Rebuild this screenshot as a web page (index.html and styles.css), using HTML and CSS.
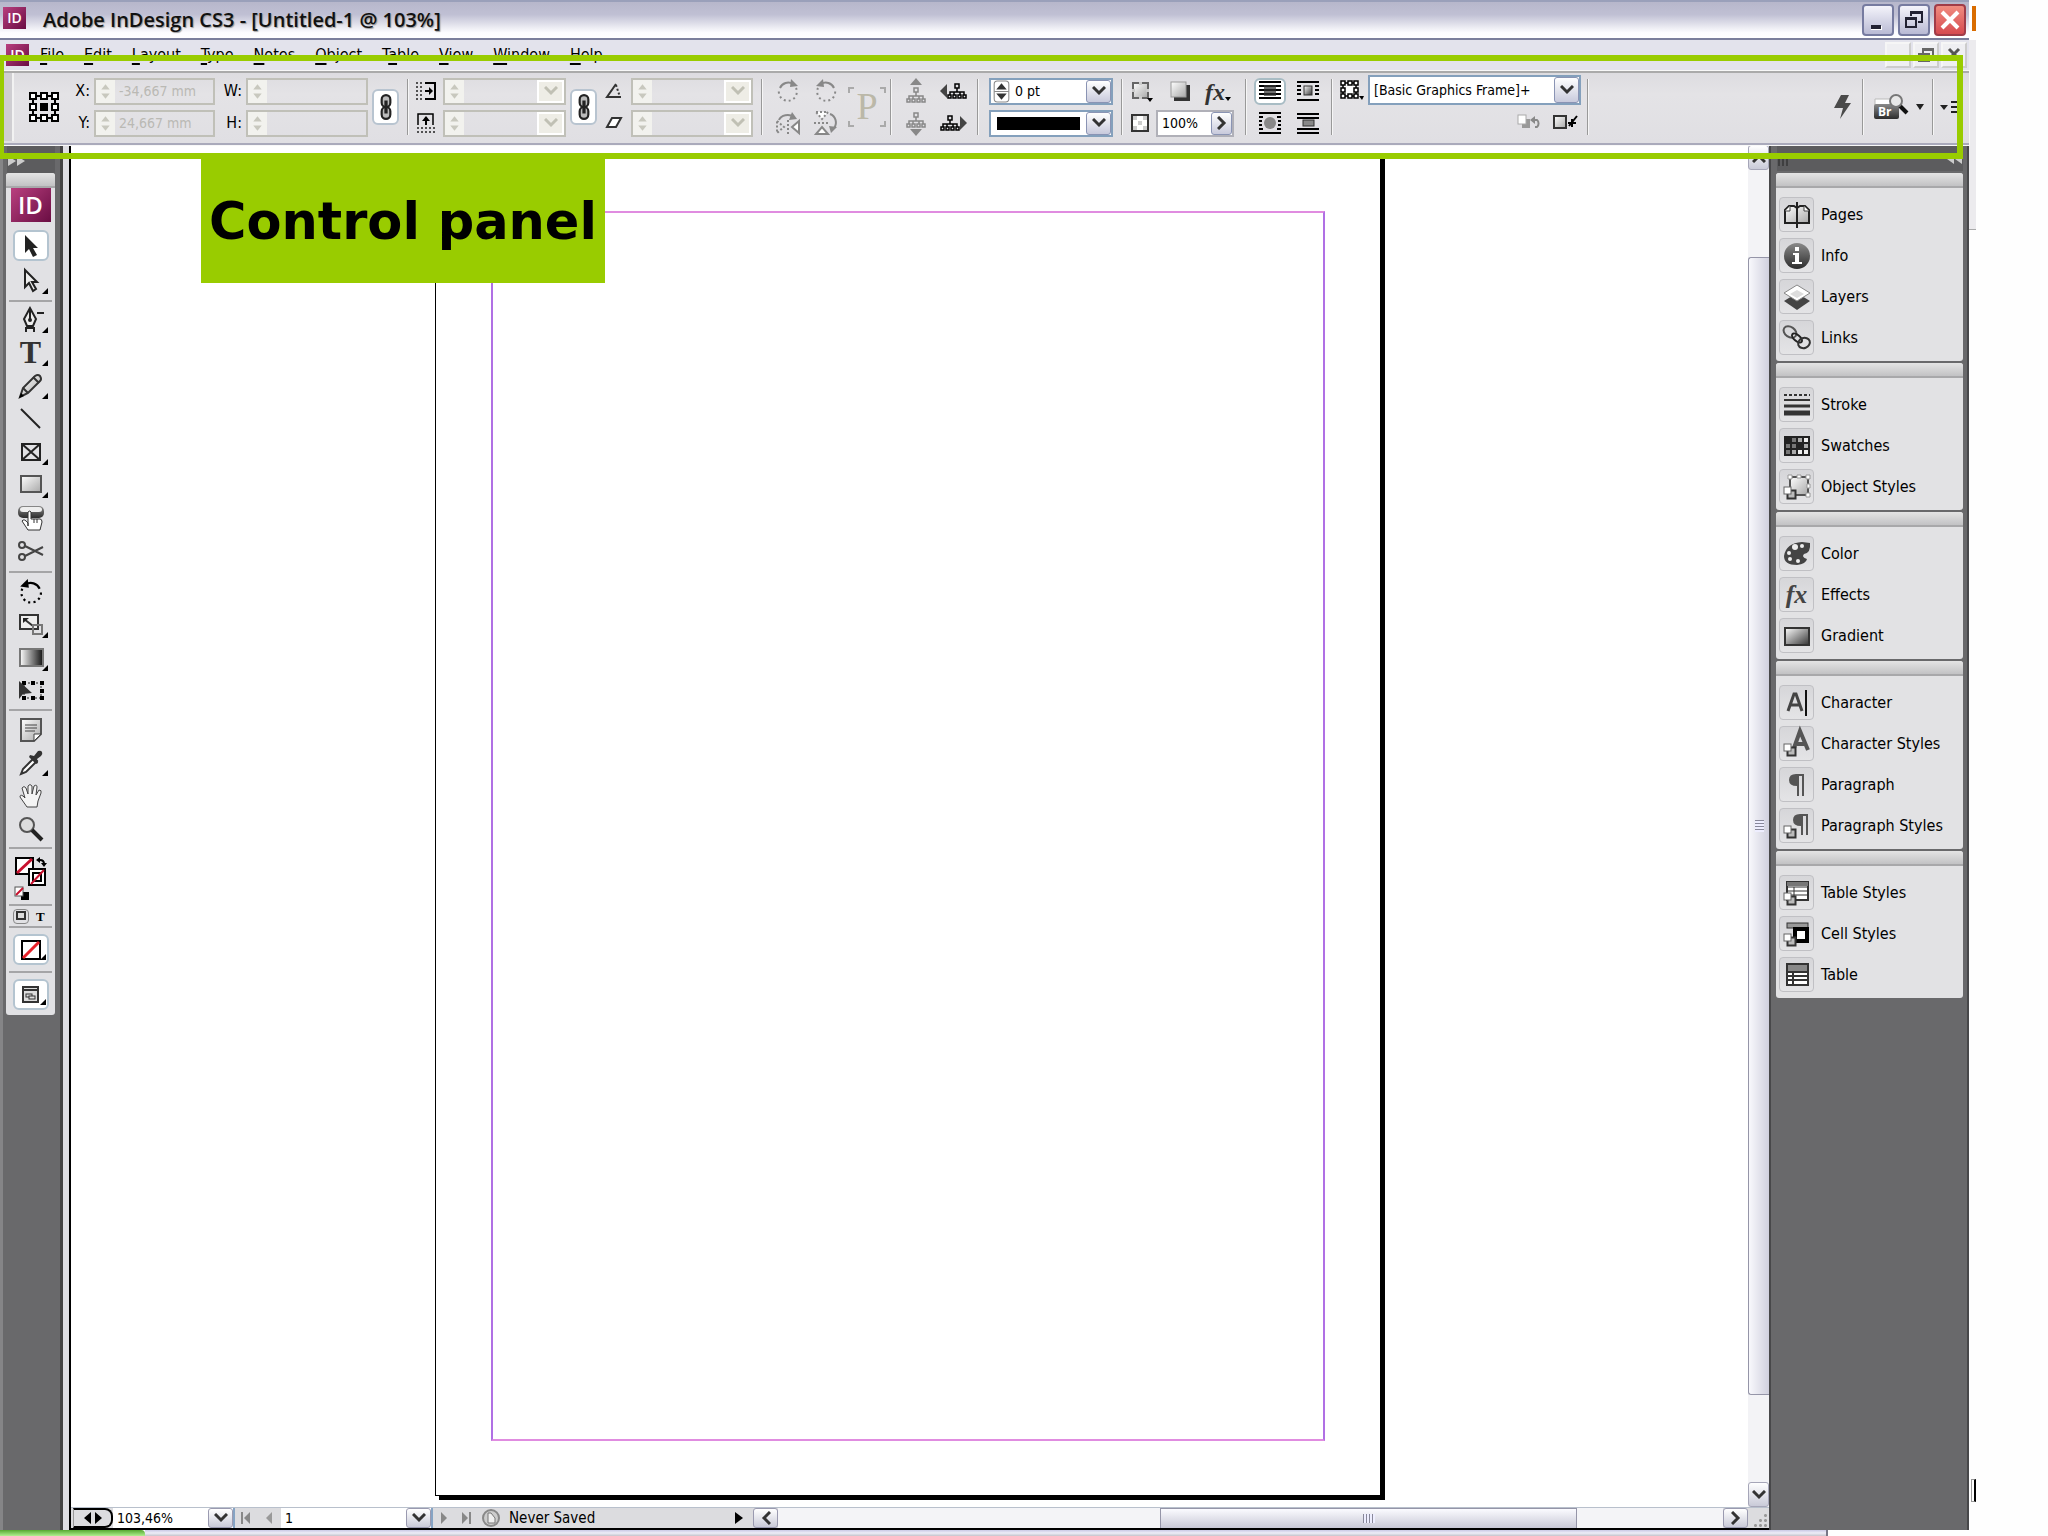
FILE: index.html
```html
<!DOCTYPE html>
<html lang="en">
<head>
<meta charset="utf-8">
<title>Adobe InDesign CS3 - [Untitled-1 @ 103%]</title>
<link rel="stylesheet" href="styles.css">
</head>
<body>
<svg class="defs" aria-hidden="true">
  <defs>
    <linearGradient id="g-bw" x1="0" y1="0" x2="1" y2="0"><stop offset="0" stop-color="#fff"/><stop offset="1" stop-color="#111"/></linearGradient>
    <linearGradient id="g-diag" x1="0" y1="0" x2="1" y2="1"><stop offset="0" stop-color="#fff"/><stop offset="1" stop-color="#333"/></linearGradient>
    <linearGradient id="g-soft" x1="0" y1="0" x2="1" y2="1"><stop offset="0" stop-color="#fff"/><stop offset="1" stop-color="#a8a8a8"/></linearGradient>
    <linearGradient id="g-dark" x1="0" y1="0" x2="0" y2="1"><stop offset="0" stop-color="#8a8a8a"/><stop offset="1" stop-color="#2c2c2c"/></linearGradient>
    <symbol id="spin" viewBox="0 0 12 20"><path d="M2 8l4-5 4 5zM2 12l4 5 4-5z" fill="currentColor"/></symbol>
    <symbol id="spinbox" viewBox="0 0 16 22"><rect x="1" y="1" width="14" height="20" rx="3" fill="#fff" stroke="#888"/><path d="M1 11h14" stroke="#888"/><path d="M3 9l5-6 5 6zM3 13l5 6 5-6z" fill="#333"/></symbol>
    <symbol id="chev" viewBox="0 0 14 10"><path d="M1 1l6 6 6-6" fill="none" stroke="currentColor" stroke-width="3"/></symbol>
    <symbol id="link" viewBox="0 0 12 24"><g fill="#bbb" stroke="#222" stroke-width="2"><rect x="2" y="1" width="8" height="11" rx="4"/><rect x="2" y="12" width="8" height="11" rx="4"/></g><path d="M6 6v12" stroke="#222" stroke-width="3"/></symbol>
    <symbol id="tree" viewBox="0 0 20 16"><g fill="none" stroke="currentColor" stroke-width="1.500"><rect x="8" y="1" width="4" height="4"/><path d="M10 5v4M3 12V9h14v3M7 12V9M13 12V9"/><rect x="1" y="12" width="3" height="3"/><rect x="6" y="12" width="3" height="3"/><rect x="11" y="12" width="3" height="3"/><rect x="16" y="12" width="3" height="3"/></g></symbol>
    <symbol id="stack" viewBox="0 0 14 14"><rect x="4.500" y="4.500" width="8" height="8" fill="#bbb" stroke="#333" stroke-width="2"/><rect x="1" y="1" width="7" height="7" fill="#fff" stroke="#666"/></symbol>
    <symbol id="rot" viewBox="0 0 24 24"><path d="M20 9a9 9 0 1 1-17 2" fill="none" stroke="currentColor" stroke-width="2" stroke-dasharray="2 3"/><path d="M4 9a9 9 0 0 1 13-4" fill="none" stroke="currentColor" stroke-width="2"/><path d="M15 0l7 7-8 1z" fill="currentColor"/></symbol>
  </defs>
</svg>

<div class="desktop">
  <main class="app">
    <header class="titlebar">
      <span class="logo logo-s">ID</span>
      <h1>Adobe InDesign CS3 - [Untitled-1 @ 103%]</h1>
      <div class="winbtns">
        <button aria-label="Minimize"><svg width="24" height="24"><path d="M5 18h11v4H5z" fill="#fff"/><path d="M5 17h10v4H5z" fill="#223"/></svg></button>
        <button aria-label="Restore"><svg width="24" height="24" fill="none" stroke="#223" stroke-width="2"><path d="M9 8V4h11v10h-4"/><path d="M9 5h11"/><rect x="4" y="10" width="10" height="9"/><path d="M4 11h10"/></svg></button>
        <button class="close" aria-label="Close"><svg width="24" height="24" stroke="#fff" stroke-width="4"><path d="M4 4l16 16M20 4L4 20"/></svg></button>
      </div>
    </header>

    <nav class="menubar" aria-label="Main menu">
      <span class="logo logo-s">ID</span>
      <a href="#"><u>F</u>ile</a><a href="#"><u>E</u>dit</a><a href="#"><u>L</u>ayout</a><a href="#"><u>T</u>ype</a><a href="#"><u>N</u>otes</a><a href="#"><u>O</u>bject</a><a href="#">T<u>a</u>ble</a><a href="#"><u>V</u>iew</a><a href="#"><u>W</u>indow</a><a href="#"><u>H</u>elp</a>
      <div class="docbtns">
        <button aria-label="Minimize document"></button>
        <button aria-label="Restore document"><svg width="18" height="18" fill="none" stroke="#666" stroke-width="2"><path d="M6 7V3h10v8h-3M6 4h10"/><rect x="2" y="8" width="10" height="7"/></svg></button>
        <button aria-label="Close document"><svg width="18" height="18" stroke="#555" stroke-width="3"><path d="M4 3l10 10M14 3L4 13"/></svg></button>
      </div>
    </nav>

    <section class="controls" aria-label="Control panel">
      <span class="grip"></span>
      <button class="refpoint" aria-label="Reference point"><svg width="30" height="30" viewBox="0 0 30 30"><g fill="none" stroke="#000" stroke-width="2"><path d="M8 4h4M18 4h5M8 26h4M18 26h5M4 8v4M4 18v5M26 8v4M26 18v5"/><g fill="#fff"><rect x="1" y="1" width="6" height="6"/><rect x="12" y="1" width="6" height="6"/><rect x="23" y="1" width="6" height="6"/><rect x="1" y="12" width="6" height="6"/><rect x="23" y="12" width="6" height="6"/><rect x="1" y="23" width="6" height="6"/><rect x="12" y="23" width="6" height="6"/><rect x="23" y="23" width="6" height="6"/></g></g><rect x="11" y="11" width="8" height="8"/></svg></button>
      <div class="pairs pos">
        <label for="x">X:</label><div class="field off"><svg class="sp"><use href="#spin"/></svg><input id="x" value="-34,667 mm" disabled></div>
        <label for="y">Y:</label><div class="field off"><svg class="sp"><use href="#spin"/></svg><input id="y" value="24,667 mm" disabled></div>
      </div>
      <div class="pairs size">
        <label for="w">W:</label><div class="field off"><svg class="sp"><use href="#spin"/></svg><input id="w" disabled></div>
        <label for="h">H:</label><div class="field off"><svg class="sp"><use href="#spin"/></svg><input id="h" disabled></div>
      </div>
      <button class="linkbtn" aria-label="Constrain proportions"><svg width="14" height="26"><use href="#link"/></svg></button>
      <span class="sep"></span>
      <div class="pairs scale">
        <label for="sx"><svg width="20" height="18"><path d="M1 0v18M5 0v18" stroke="#222" stroke-width="1.500" stroke-dasharray="2 2"/><path d="M9 1h10v16H9" fill="none" stroke="#000" stroke-width="2"/><path d="M9 9h6" stroke="#000" stroke-width="2"/><path d="M13 5l4 4-4 4z"/></svg></label><div class="field off"><svg class="sp"><use href="#spin"/></svg><input id="sx" aria-label="Scale X" disabled><button disabled aria-label="Scale X values"><svg class="cv"><use href="#chev"/></svg></button></div>
        <label for="sy"><svg width="18" height="20"><path d="M1 12V1h15v11" fill="none" stroke="#000" stroke-width="1.500"/><path d="M9 5v7" stroke="#000" stroke-width="2"/><path d="M5 8l4-5 4 5z"/><path d="M0 15h18M0 19h18" stroke="#222" stroke-width="1.500" stroke-dasharray="2 2"/></svg></label><div class="field off"><svg class="sp"><use href="#spin"/></svg><input id="sy" aria-label="Scale Y" disabled><button disabled aria-label="Scale Y values"><svg class="cv"><use href="#chev"/></svg></button></div>
      </div>
      <button class="linkbtn" aria-label="Constrain scaling"><svg width="14" height="26"><use href="#link"/></svg></button>
      <div class="pairs angle">
        <label for="ro"><svg width="18" height="16"><path d="M11 1L2 14h14" fill="none" stroke="#333" stroke-width="2"/><path d="M11 2l4 12" stroke="#333" stroke-width="2" stroke-dasharray="2 2"/></svg></label><div class="field off"><svg class="sp"><use href="#spin"/></svg><input id="ro" aria-label="Rotation angle" disabled><button disabled aria-label="Rotation values"><svg class="cv"><use href="#chev"/></svg></button></div>
        <label for="sh"><svg width="18" height="14"><path d="M7 2h9l-5 9H2z" fill="#fff" stroke="#333" stroke-width="2"/></svg></label><div class="field off"><svg class="sp"><use href="#spin"/></svg><input id="sh" aria-label="Shear angle" disabled><button disabled aria-label="Shear values"><svg class="cv"><use href="#chev"/></svg></button></div>
      </div>
      <span class="sep wide"></span>
      <div class="icons two dim">
        <button aria-label="Rotate clockwise"><svg width="24" height="24"><use href="#rot"/></svg></button>
        <button aria-label="Rotate counterclockwise"><svg class="mirror" width="24" height="24"><use href="#rot"/></svg></button>
        <button aria-label="Flip horizontal"><svg width="26" height="24" fill="none" stroke="#888" stroke-width="2"><path d="M4 9a9 7 0 0 1 15-3"/><path d="M17 1l5 7-8 1z" fill="#888" stroke="none"/><path d="M13 9v14" stroke-dasharray="2 2"/><path d="M2 10l7 6-7 6z" stroke-dasharray="2 2"/><path d="M24 10l-7 6 7 6z" fill="#fff"/></svg></button>
        <button aria-label="Flip vertical"><svg width="26" height="24" fill="none" stroke="#888" stroke-width="2"><path d="M3 1h12l-6 7z" fill="#fff" stroke-dasharray="2 2"/><path d="M1 12h16" stroke-dasharray="2 2"/><path d="M3 23h12l-6-7z" fill="#fff"/><path d="M17 3a9 9 0 0 1 4 14"/><path d="M16 15l8 1-6 6z" fill="#888" stroke="none"/></svg></button>
      </div>
      <span class="pmark">P</span>
      <span class="sep tight"></span>
      <div class="icons two">
        <button class="muted" aria-label="Select container"><svg width="20" height="26"><path d="M4 7l6-7 6 7z" fill="currentColor"/><use href="#tree" y="9" width="20" height="16"/></svg></button>
        <button aria-label="Select previous object"><svg width="28" height="20"><path d="M7 3v14l-7-7z" fill="#444"/><use href="#tree" x="7" y="2" width="20" height="16"/></svg></button>
        <button class="muted" aria-label="Select content"><svg width="20" height="26"><path d="M4 19l6 7 6-7z" fill="currentColor"/><use href="#tree" y="2" width="20" height="16"/></svg></button>
        <button aria-label="Select next object"><svg width="28" height="20"><path d="M20 3v14l7-7z" fill="#444"/><use href="#tree" y="2" width="20" height="16"/></svg></button>
      </div>
      <span class="sep tight"></span>
      <div class="pairs stroke">
        <div class="field on"><svg class="boxed"><use href="#spinbox"/></svg><input id="sw" aria-label="Stroke weight" value="0 pt"><button aria-label="Stroke weights"><svg class="cv"><use href="#chev"/></svg></button></div>
        <div class="field on"><span class="solid"></span><button aria-label="Stroke type"><svg class="cv"><use href="#chev"/></svg></button></div>
      </div>
      <span class="sep"></span>
      <div class="fxgroup">
        <div class="icons three">
          <button aria-label="Object effects target"><svg width="24" height="22"><rect x="3" y="3" width="15" height="15" fill="url(#g-soft)" stroke="#666" stroke-width="2"/><path d="M9 2h3v3H9zM9 16h3v3H9zM2 9h3v3H2zM16 9h3v3h-3z" fill="#ccc"/><path d="M17 18h6l-3 4z"/></svg></button>
          <button aria-label="Drop shadow"><svg width="22" height="22"><rect x="5" y="5" width="16" height="16" fill="#333"/><rect x="2" y="2" width="15" height="15" fill="url(#g-soft)" stroke="#999"/></svg></button>
          <button class="fx" aria-label="Effects"><span>fx</span><svg width="6" height="4"><path d="M0 0h6l-3 4z"/></svg></button>
        </div>
        <div class="opac">
          <label for="op"><svg width="18" height="18"><rect x="1" y="1" width="16" height="16" fill="#fff" stroke="#333" stroke-width="2"/><path d="M2 2h4v4H2zM12 2h4v4h-4zM7 7h4v4H7zM2 12h4v4H2zM12 12h4v4h-4z" fill="#ccc"/></svg></label>
          <div class="field opf"><input id="op" aria-label="Opacity" value="100%"><button aria-label="Opacity slider"><svg class="cv right"><use href="#chev"/></svg></button></div>
        </div>
      </div>
      <span class="sep wide"></span>
      <div class="icons two gap">
        <button class="active" aria-label="No text wrap"><svg width="22" height="22"><path d="M0 2h22M0 6h22M0 10h22M0 14h22M0 18h22" stroke="#000" stroke-width="2"/><rect x="5" y="5" width="12" height="11" fill="#333" fill-opacity=".7"/></svg></button>
        <button aria-label="Wrap around bounding box"><svg width="22" height="22"><path d="M0 2h22M0 6h4M18 6h4M0 10h4M18 10h4M0 14h4M18 14h4M0 20h22" stroke="#000" stroke-width="2"/><rect x="7" y="6" width="8" height="9" fill="url(#g-diag)" stroke="#333"/></svg></button>
        <button aria-label="Wrap around object shape"><svg width="22" height="22"><path d="M0 1h22M0 5h4M18 5h4M0 9h3M19 9h3M0 13h3M19 13h3M0 17h4M18 17h4M0 21h22" stroke="#000" stroke-width="2"/><circle cx="11" cy="11" r="6" fill="#888"/></svg></button>
        <button aria-label="Jump object"><svg width="22" height="22"><path d="M0 2h22M0 6h22M0 17h22M0 21h22" stroke="#000" stroke-width="2"/><rect x="6" y="8" width="11" height="6" fill="#888" stroke="#333"/></svg></button>
      </div>
      <span class="sep tight"></span>
      <div class="styles">
        <label for="os"><svg width="24" height="20"><g fill="none" stroke="#000" stroke-width="1.500"><rect x="3" y="3" width="13" height="13" fill="#fff"/><g fill="#fff"><rect x="1" y="1" width="4" height="4"/><rect x="8" y="1" width="4" height="4"/><rect x="14" y="1" width="4" height="4"/><rect x="1" y="8" width="4" height="4"/><rect x="14" y="8" width="4" height="4"/><rect x="1" y="14" width="4" height="4"/><rect x="8" y="14" width="4" height="4"/><rect x="14" y="14" width="4" height="4"/></g></g><path d="M19 16h5l-2 4z"/></svg></label>
        <div class="field on sel"><select id="os" aria-label="Object style"><option>[Basic Graphics Frame]+</option></select><span class="drop"><svg class="cv"><use href="#chev"/></svg></span></div>
        <div class="styleacts">
          <button aria-label="Clear overrides"><svg width="24" height="16"><rect x="5" y="5" width="8" height="9" fill="#999"/><rect x="1" y="1" width="8" height="9" fill="#fff" stroke="#aaa"/><path d="M17 6h3a3 4 0 0 1 0 7h-2" fill="none" stroke="#888" stroke-width="2"/><path d="M13 6l5-4v8z" fill="#888"/></svg></button>
          <button aria-label="Redefine style"><svg width="24" height="16"><rect x="1" y="2" width="12" height="12" fill="url(#g-soft)" stroke="#333" stroke-width="2"/><path d="M15 9h8M19 5v8M16 12l8-10" stroke="#000" stroke-width="2"/></svg></button>
        </div>
      </div>
      <span class="sep near"></span>
      <span class="fill"></span>
      <button class="plain" aria-label="Quick apply"><svg width="18" height="24"><path d="M8 0h8l-4 8h6L7 24l3-11H1z" fill="#4a4a4a"/></svg></button>
      <span class="sep bolt"></span>
      <button class="plain bridge" aria-label="Go to Bridge"><svg width="36" height="26"><path d="M1 5h24v6H1z" fill="#fff" stroke="#bbb"/><rect y="10" width="25" height="15" rx="2" fill="url(#g-dark)"/><path d="M25 11l8 8" stroke="#111" stroke-width="4"/><circle cx="22" cy="7" r="6" fill="#e8e8e8" stroke="#777" stroke-width="2"/><text x="4" y="22" class="br">Br</text></svg><svg width="8" height="6"><path d="M0 0h8L4 6z" fill="#222"/></svg></button>
      <span class="sep"></span>
      <button class="plain flyout" aria-label="Panel menu"><svg width="24" height="14"><path d="M0 5h8l-4 5z" fill="#222"/><path d="M11 2h12M11 7h12M11 12h12" stroke="#222" stroke-width="2"/></svg></button>
    </section>

    <div class="work">
      <aside class="toolcol">
        <div class="dockhead"><svg width="18" height="10"><path d="M0 0l8 5-8 5zM9 0l8 5-8 5z" fill="#ccc"/></svg></div>
        <div class="tools">
          <div class="cap"></div>
          <span class="logo logo-l">ID</span>
          <div class="tg sel-tools">
            <button class="tool active" aria-label="Selection tool"><svg width="28" height="28"><path d="M8 3v18l4-4 4 8 4-2-4-7h5z" fill="#222"/></svg></button>
            <button class="tool more" aria-label="Direct selection tool"><svg width="28" height="28"><path d="M8 3v17l4-4 4 8 3-2-4-7h5z" fill="#eee" stroke="#222" stroke-width="2"/></svg></button>
          </div>
          <div class="tg draw-tools">
            <button class="tool more" aria-label="Pen tool"><svg width="28" height="28" fill="none" stroke="#222" stroke-width="2"><path d="M13 2l-6 11 3 7h6l3-7z" fill="#eee"/><path d="M13 3v10M8 22h10M9 22v4M17 22v4M20 7h7"/><circle cx="13" cy="14" r="1"/></svg></button>
            <button class="tool more serif" aria-label="Type tool">T</button>
            <button class="tool more" aria-label="Pencil tool"><svg width="28" height="28"><path d="M3 25l3-9L18 4q3-2 5 0 2 3 0 5L11 21z" fill="url(#g-soft)" stroke="#333" stroke-width="2"/><path d="M16 5l6 6M6 16l5 5" stroke="#333" stroke-width="2"/><path d="M2 26l2-5 3 3z"/></svg></button>
            <button class="tool" aria-label="Line tool"><svg width="28" height="28"><path d="M4 4l19 19" stroke="#222" stroke-width="2"/></svg></button>
            <button class="tool more" aria-label="Rectangle frame tool"><svg width="28" height="28"><path d="M5 6h18v16H5zM5 6l18 16M23 6L5 22" fill="none" stroke="#222" stroke-width="2"/></svg></button>
            <button class="tool more" aria-label="Rectangle tool"><svg width="28" height="28"><rect x="4" y="5" width="20" height="16" fill="url(#g-soft)" stroke="#555" stroke-width="2"/></svg></button>
            <button class="tool" aria-label="Button tool"><svg width="28" height="28"><rect x="1" y="2" width="26" height="12" rx="5" fill="url(#g-dark)"/><rect x="3" y="3" width="22" height="5" rx="3" fill="#eee"/><path d="M11 22V8q2-2 3 0v7h9q2 0 2 3l-2 8H11l-6-9q2-3 6 2z" fill="#fff" stroke="#333"/><path d="M17 15v4M20 15v4" stroke="#333"/></svg></button>
            <button class="tool" aria-label="Scissors tool"><svg width="28" height="28" fill="none" stroke="#444" stroke-width="2"><circle cx="5" cy="8" r="3"/><circle cx="5" cy="20" r="3"/><path d="M8 9l18 9M8 19l18-9"/></svg></button>
          </div>
          <div class="tg">
            <button class="tool" aria-label="Rotate tool"><svg class="mirror" width="26" height="26"><use href="#rot"/></svg></button>
            <button class="tool more" aria-label="Scale tool"><svg width="28" height="28" fill="none" stroke="#333" stroke-width="2"><rect x="3" y="4" width="18" height="14" fill="#eee"/><path d="M7 8l9 7"/><path d="M6 7h6l-6 5z" fill="#222" stroke="none"/><rect x="16" y="14" width="9" height="9" stroke="#777"/></svg></button>
            <button class="tool more" aria-label="Gradient tool"><svg width="28" height="28"><rect x="3" y="5" width="23" height="17" fill="url(#g-bw)" stroke="#777" stroke-width="2"/></svg></button>
            <button class="tool" aria-label="Free transform tool"><svg width="28" height="28"><rect x="7" y="6" width="17" height="15" fill="none" stroke="#222" stroke-dasharray="2 2"/><path d="M5 4h4v4H5zM14 4h4v4h-4zM23 4h4v4h-4zM23 12h4v4h-4zM5 19h4v4H5zM14 19h4v4h-4zM23 19h4v4h-4z"/><path d="M2 4v18l4-5 9-1z" fill="#333"/></svg></button>
          </div>
          <div class="tg">
            <button class="tool" aria-label="Note tool"><svg width="28" height="28"><path d="M4 3h20v15l-7 7H4z" fill="url(#g-soft)" stroke="#555" stroke-width="2"/><path d="M24 18h-7v7z" fill="#fff" stroke="#444"/><path d="M8 9h12M8 12h12M8 15h10" stroke="#444"/></svg></button>
            <button class="tool more" aria-label="Eyedropper tool"><svg width="28" height="28"><path d="M4 25l2-5L17 9l3 3L9 23z" fill="#fff" stroke="#333" stroke-width="2"/><path d="M13 6l4 1 4-5q3-1 4 1t-1 4l-4 3 1 4-2 1-7-7z" fill="#333"/></svg></button>
            <button class="tool" aria-label="Hand tool"><svg width="28" height="28"><path d="M10 25L3 15q0-3 3-1l2 2-3-10q2-3 4 0l2 6V4q2-3 4 0v8l2-8q3-2 3 1l-1 8 3-5q3 0 2 3l-3 8-1 6z" fill="#f4f4f4" stroke="#444" stroke-width="1"/></svg></button>
            <button class="tool" aria-label="Zoom tool"><svg width="28" height="28"><circle cx="10" cy="10" r="7" fill="#ddd" stroke="#555" stroke-width="2"/><path d="M15 15l10 10" stroke="#222" stroke-width="4"/></svg></button>
          </div>
          <div class="tg swatchwell">
            <button aria-label="Fill and stroke"><svg width="36" height="46"><rect x="3" y="2" width="17" height="16" fill="#fff" stroke="#000" stroke-width="2"/><path d="M4 17L19 3" stroke="#c8102e" stroke-width="3"/><rect x="16" y="13" width="16" height="16" fill="#fff" stroke="#000" stroke-width="2"/><rect x="20" y="17" width="8" height="8" fill="#fff" stroke="#000" stroke-width="2"/><path d="M18 28L31 14" stroke="#c8102e" stroke-width="2"/><path d="M27 4q4 0 4 4" fill="none" stroke="#000" stroke-width="2"/><path d="M23 4l4-3v6zM28 7h6l-3 4z"/><rect x="8" y="36" width="8" height="8"/><rect x="2" y="31" width="8" height="9" fill="#fff" stroke="#555" stroke-width="1"/><path d="M3 39l7-7" stroke="#c8102e" stroke-width="2"/></svg></button>
          </div>
          <div class="tg minirow">
            <button class="mini on" aria-label="Formatting affects container"><svg width="10" height="10"><rect x="1" y="1" width="8" height="7" fill="#ddd" stroke="#333" stroke-width="2"/></svg></button>
            <button class="mini" aria-label="Formatting affects text">T</button>
          </div>
          <div class="tg"><button class="tool active more" aria-label="Apply none"><svg width="20" height="20"><rect x="1" y="1" width="18" height="18" fill="#fff" stroke="#000" stroke-width="2"/><path d="M2 18L18 2" stroke="#e8222a" stroke-width="3"/></svg></button></div>
          <div class="tg"><button class="tool active more" aria-label="Screen mode"><svg width="18" height="18" fill="none" stroke="#333" stroke-width="2"><rect x="1" y="1" width="15" height="15" fill="#ddd"/><path d="M1 4h15"/><rect x="4" y="8" width="6" height="3" stroke-width="1"/><rect x="7" y="10" width="6" height="3" fill="#ddd" stroke-width="1"/></svg></button></div>
        </div>
      </aside>

      <section class="doc" aria-label="Document window">
        <div class="canvasrow">
          <div class="canvas"><article class="page"><div class="margins"></div></article></div>
          <div class="vscroll">
            <button aria-label="Scroll up"><svg class="cv up"><use href="#chev"/></svg></button>
            <div class="vtrack"><div class="vthumb"><i></i></div></div>
            <button aria-label="Scroll down"><svg class="cv"><use href="#chev"/></svg></button>
          </div>
        </div>
        <footer class="status">
          <button class="split" aria-label="Split layout"><svg width="20" height="14"><path d="M8 1v12L1 7zM12 1v12l7-6z"/></svg></button>
          <div class="cell zoomcell"><input aria-label="Zoom level" value="103,46%"><button aria-label="Zoom values"><svg class="cv"><use href="#chev"/></svg></button></div>
          <button class="nav" aria-label="First page"><svg width="10" height="12"><path d="M1 0v12" stroke="#888" stroke-width="2"/><path d="M9 0v12L3 6z" fill="#888"/></svg></button>
          <button class="nav" aria-label="Previous page"><svg width="7" height="12"><path d="M6 0v12L0 6z" fill="#999"/></svg></button>
          <div class="cell pagecell"><input aria-label="Page" value="1"><button aria-label="Pages list"><svg class="cv"><use href="#chev"/></svg></button></div>
          <button class="nav" aria-label="Next page"><svg width="7" height="12"><path d="M0 0v12l6-6z" fill="#888"/></svg></button>
          <button class="nav" aria-label="Last page"><svg width="10" height="12"><path d="M0 0v12l6-6z" fill="#888"/><path d="M8 0v12" stroke="#888" stroke-width="2"/></svg></button>
          <div class="saved"><svg width="18" height="18"><circle cx="9" cy="9" r="8" fill="#ccc" stroke="#888" stroke-width="2"/><path d="M6 4h3l4 5v5H6z" fill="#eee" stroke="#777"/></svg><span>Never Saved</span><svg width="8" height="12"><path d="M0 0v12l8-6z"/></svg></div>
          <button class="hbtn" aria-label="Scroll left"><svg class="cv left"><use href="#chev"/></svg></button>
          <div class="htrack"><div class="hthumb"><i></i></div></div>
          <button class="hbtn" aria-label="Scroll right"><svg class="cv right"><use href="#chev"/></svg></button>
          <span class="corner"></span>
        </footer>
      </section>

      <aside class="dock">
        <div class="dockhead"><svg width="10" height="12"><path d="M1 0v12M5 0v12M9 0v12" stroke="#222"/></svg><svg width="16" height="10"><path d="M7 0v9L0 4zM15 0v9L8 4z" fill="#ccc"/></svg></div>
        <div class="group"><div class="cap"></div>
          <button><span class="pi"><svg viewBox="0 0 28 28"><path d="M2 22V9l4-4h5l3 2 3-2h5l4 4v13z" fill="url(#g-soft)" stroke="#222" stroke-width="2"/><path d="M2 10h5V5M26 10h-5V5" fill="#fff" stroke="#444"/><path d="M14 1v26" stroke="#222" stroke-width="2"/></svg></span>Pages</button>
          <button><span class="pi"><svg viewBox="0 0 28 28"><circle cx="14" cy="14" r="13" fill="url(#g-dark)"/><path d="M12 5h4v4h-4zM10 11h6v9h3v2H9v-2h3v-7h-2z" fill="#fff"/></svg></span>Info</button>
          <button><span class="pi"><svg viewBox="0 0 28 28"><path d="M1 18l13-8 13 8-13 9z" fill="#444"/><path d="M1 10l13-8 13 8-13 8z" fill="#fff" stroke="#888"/><path d="M7 11l7-4 7 4-7 4z" fill="#ddd"/></svg></span>Layers</button>
          <button><span class="pi"><svg viewBox="0 0 28 28" fill="none" stroke="#555" stroke-width="2"><ellipse cx="7" cy="8" rx="7" ry="5" transform="rotate(35 7 8)"/><ellipse cx="14" cy="14" rx="6" ry="3" transform="rotate(40 14 14)" stroke="#222"/><ellipse cx="21" cy="19" rx="6" ry="5" transform="rotate(-20 21 19)" stroke="#333"/></svg></span>Links</button>
        </div>
        <div class="group"><div class="cap"></div>
          <button><span class="pi"><svg viewBox="0 0 28 28" stroke="#333"><path d="M1 4h26" stroke-width="2" stroke-dasharray="3 2"/><path d="M1 9h26" stroke-width="2"/><path d="M1 15h26" stroke-width="3"/><path d="M1 22h26" stroke-width="5"/></svg></span>Stroke</button>
          <button><span class="pi"><svg viewBox="0 0 28 28"><rect x="1" y="4" width="26" height="20" fill="#222"/><path d="M9 6h4v4H9zM3 12h4v4H3zM9 12h4v4H9zM3 18h4v4H3z" fill="#777"/><path d="M15 6h4v4h-4zM9 18h4v4H9zM21 12h4v4h-4z" fill="#aaa"/><path d="M21 6h4v4h-4zM21 18h4v4h-4zM15 18h4v4h-4z" fill="#eee"/></svg></span>Swatches</button>
          <button><span class="pi"><svg viewBox="0 0 28 28"><rect x="7" y="4" width="18" height="18" fill="url(#g-soft)" stroke="#555" stroke-width="2"/><path d="M5 2h4v4H5zM14 2h4v3h-4zM23 2h4v4h-4zM24 11h3v4h-3zM23 20h4v4h-4z" fill="#fff" stroke="#999"/><use href="#stack" x="0" y="13" width="14" height="14"/></svg></span>Object Styles</button>
        </div>
        <div class="group"><div class="cap"></div>
          <button><span class="pi"><svg viewBox="0 0 28 28"><path d="M27 3q1 10-6 11-3 3 3 5-1 5-10 6Q1 25 1 16 3 3 19 2z" fill="#444"/><g fill="#eee"><circle cx="6" cy="13" r="2"/><circle cx="12" cy="7" r="3"/><circle cx="19" cy="6" r="2"/><circle cx="7" cy="19" r="2"/><circle cx="15" cy="21" r="2"/></g></svg></span>Color</button>
          <button><span class="pi fxp">fx</span>Effects</button>
          <button><span class="pi"><svg viewBox="0 0 28 28"><rect x="2" y="6" width="24" height="17" fill="url(#g-diag)" stroke="#333" stroke-width="2"/></svg></span>Gradient</button>
        </div>
        <div class="group"><div class="cap"></div>
          <button><span class="pi"><svg viewBox="0 0 28 28" fill="none" stroke="#444"><path d="M5 22l6-17h2l6 17M8 16h9" stroke-width="3"/><path d="M23 1v26" stroke="#111" stroke-width="2"/></svg></span>Character</button>
          <button><span class="pi"><svg viewBox="0 0 28 28"><path d="M11 18l6-17 8 19M14 14h9" fill="none" stroke="#555" stroke-width="4"/><use href="#stack" y="13" width="14" height="14"/></svg></span>Character Styles</button>
          <button><span class="pi"><svg viewBox="0 0 28 28"><path d="M21 3v22h-2V5h-3v20h-2V15Q6 15 6 9t7-6z" fill="#555"/></svg></span>Paragraph</button>
          <button><span class="pi"><svg viewBox="0 0 28 28"><path d="M25 2v21h-2V4h-3v19h-2V14Q10 14 10 8t7-6z" fill="#555"/><use href="#stack" y="13" width="14" height="14"/></svg></span>Paragraph Styles</button>
        </div>
        <div class="group"><div class="cap"></div>
          <button><span class="pi"><svg viewBox="0 0 28 28"><rect x="4" y="3" width="21" height="18" fill="#fff" stroke="#333" stroke-width="2"/><path d="M4 3h21v4H4z" fill="#777"/><path d="M4 8h21M4 12h21M4 16h21M11 8v13" stroke="#333" stroke-width="1"/><use href="#stack" y="13" width="14" height="14"/></svg></span>Table Styles</button>
          <button><span class="pi"><svg viewBox="0 0 28 28"><rect x="4" y="3" width="21" height="5" fill="#999" stroke="#333"/><rect x="12" y="9" width="12" height="12" fill="#fff" stroke="#000" stroke-width="4"/><use href="#stack" y="13" width="14" height="14"/></svg></span>Cell Styles</button>
          <button><span class="pi"><svg viewBox="0 0 28 28"><rect x="4" y="3" width="21" height="21" fill="#fff" stroke="#333" stroke-width="2"/><path d="M5 4h19v6H5z" fill="#888"/><path d="M4 11h21M4 15h21M4 19h21M10 11v13" stroke="#333" stroke-width="2"/></svg></span>Table</button>
        </div>
      </aside>
    </div>
    <div class="callout"><span>Control panel</span></div>
  </main>

  <div class="behind"><i class="orange"></i><i class="strip"></i><i class="blank"></i><i class="edge"></i></div>
</div>
<div class="taskbar"><i class="start"></i><i class="bar"></i></div>
</body>
</html>
```
FILE: styles.css
```css
* { box-sizing: border-box; }

body {
  margin: 0;
  min-height: 100vh;
  display: flex;
  flex-direction: column;
  background: #fefefe;
  color: #000;
  font: 16px/20px "DejaVu Sans Condensed", "DejaVu Sans", Tahoma, sans-serif;
}

button, input, select { font: inherit; color: inherit; margin: 0; padding: 0; border: 0; background: none; }
button { display: flex; align-items: center; justify-content: center; }
input, select { min-width: 0; width: 100%; flex: 1; }
svg { display: block; flex: none; overflow: visible; }
.defs { width: 0; height: 0; position: absolute; }
.mirror { transform: scaleX(-1); }

.desktop { flex: 1; display: flex; }
.app { flex: 1; min-width: 0; position: relative; display: flex; flex-direction: column; background: #e2e1e5; }

/* product badge */
.logo { flex: none; display: flex; align-items: center; justify-content: center; background: linear-gradient(135deg, #b9407f, #6a0d43); color: #fff; font-family: "Open Sans", sans-serif; font-weight: 600; }
.logo-s { width: 23px; height: 22px; font-size: 14px; line-height: 20px; }
.logo-l { width: 40px; height: 34px; margin: 0 auto; font-size: 24px; line-height: 34px; }

/* title bar */
.titlebar { height: 40px; display: flex; align-items: center; padding: 0 3px; border-top: 2px solid #9aa0ba; border-bottom: 2px solid #7b7f9c; background: linear-gradient(#b7b7cb, #c0c0d4 35%, #fdfdff 85%, #fff); }
.titlebar .logo { margin: 0 17px 4px 0; }
.titlebar h1 { flex: 1; margin: 0; font: 600 20px/30px "Open Sans", sans-serif; color: #111; text-shadow: 1px 1px 1px #999; }
.winbtns { display: flex; gap: 4px; }
.winbtns button { width: 32px; height: 32px; border: 2px solid #767ba0; border-radius: 4px; background: linear-gradient(#f4f4fb, #b9bad4); }
.winbtns .close { border-color: #a03c48; background: linear-gradient(#f08c80, #d64b50); }

/* menu bar */
.menubar { height: 31px; display: flex; align-items: center; gap: 20px; padding: 0 2px 2px 6px; background: #e3e3ec; }
.menubar .logo { margin: 0 -9px 0 0; }
.menubar a { color: #000; text-decoration: none; line-height: 27px; }
.menubar u { text-underline-offset: 3px; text-decoration-thickness: 2px; }
.docbtns { margin-left: auto; display: flex; gap: 2px; }
.docbtns button { width: 26px; height: 26px; background: #efeff2; border: 2px solid; border-color: #f6f6f6 #ccc #ccc #f6f6f6; }

/* control strip */
.controls { height: 74px; padding-bottom: 2px; display: flex; align-items: center; border-top: 2px solid #aaa; border-bottom: 2px solid #aab; outline: 1px solid #f8f8f8; background: linear-gradient(#dddce0, #e4e3e6 30%, #e0dfe3); font-size: 14px; line-height: 20px; position: relative; }
.grip { align-self: stretch; width: 14px; background: #cfced2; border-right: 2px solid #f2f2f2; }
.refpoint { margin-left: 15px; width: 30px; }
.pairs { display: grid; grid-auto-rows: 27px; row-gap: 5px; align-items: center; }
.pairs label { display: flex; align-items: center; justify-content: center; font-size: 16px; }
.pos { grid-template-columns: 20px 121px; margin-left: 15px; }
.size { grid-template-columns: 31px 122px; }
.scale { grid-template-columns: 34px 123px; }
.angle { grid-template-columns: 34px 122px; }
.stroke { grid-template-columns: 124px; margin-left: 8px; }
.pos label, .size label { justify-content: flex-end; padding-right: 4px; }
.field { height: 27px; display: flex; align-items: stretch; border: 2px solid #c0c0b8; }
.field input { padding-left: 4px; outline: 0; }
.field.off { color: #bab9b4; }
.sp { width: 19px; height: 23px; padding: 1px 2px; background: #f2f2ee; color: #c8c8be; }
.field button, .drop { flex: none; width: 27px; display: flex; align-items: center; justify-content: center; border: 2px solid #fff; background: #eeede6; color: #c0c0b4; }
.cv { width: 14px; height: 10px; }
.field.on { border-color: #84a0bc; background: #fff; }
.boxed { width: 17px; height: 23px; margin: 0 1px 0 2px; }
.field.on button, .drop, .opf button { width: 25px; border: 1px solid #8a94b4; border-radius: 3px; background: linear-gradient(#fff, #c8cadc); color: #333; }
.solid { height: 13px; margin: 5px 6px; background: #000; flex: 1; }
.linkbtn { width: 27px; height: 36px; margin: 0 0 0 4px; border: 2px solid #b8c4d0; border-radius: 6px; background: #fff; }
.sep { width: 2px; height: 56px; margin-left: 8px; border-left: 1px solid #999; border-right: 1px solid #f6f6f6; }
.sep.tight { margin-left: 4px; margin-right: 2px; }
.sep.wide { margin-left: 8px; margin-right: 3px; }
.icons { display: grid; grid-auto-columns: 38px; grid-auto-rows: 27px; row-gap: 5px; }
.icons.two { grid-template-columns: 38px 38px; margin-left: 3px; }
.icons.gap { margin-left: 1px; }
.icons.three { grid-template-columns: 38px 38px 38px; }
.dim, .muted { color: #888; }
.icons .active { width: 32px; justify-self: center; border: 2px solid #a8bcc4; border-radius: 6px; background: #fff; }
.pmark { width: 38px; height: 40px; margin-left: 3px; color: #bbb8a8; font: 38px/38px "Liberation Serif", serif; text-align: center; background: linear-gradient(#aaa, #aaa) 0 0 / 6px 2px no-repeat, linear-gradient(#aaa, #aaa) 0 0 / 2px 6px no-repeat, linear-gradient(#aaa, #aaa) 100% 0 / 6px 2px no-repeat, linear-gradient(#aaa, #aaa) 100% 0 / 2px 6px no-repeat, linear-gradient(#aaa, #aaa) 0 100% / 6px 2px no-repeat, linear-gradient(#aaa, #aaa) 0 100% / 2px 6px no-repeat, linear-gradient(#aaa, #aaa) 100% 100% / 6px 2px no-repeat, linear-gradient(#aaa, #aaa) 100% 100% / 2px 6px no-repeat; }
.fxgroup { display: flex; flex-direction: column; gap: 5px; }
.fx { align-items: flex-end; color: #333; font: italic 700 24px/26px "Liberation Serif", serif; }
.fx svg { margin-bottom: 4px; }
.opac { display: flex; align-items: center; padding-left: 8px; gap: 7px; }
.opf { width: 78px; border-color: #b0b0b8; background: #fff; }
.right { transform: rotate(-90deg); }
.left { transform: rotate(90deg); }
.up { transform: rotate(180deg); }
.opf button { width: 21px; }
.styles { display: grid; grid-template-columns: 33px 213px; padding-bottom: 4px; }
.styles label { display: flex; align-items: center; justify-content: center; }
.sel { height: 30px; }
.sel select { appearance: none; padding-left: 4px; outline: 0; }
.styleacts { grid-column: 2; display: flex; justify-content: flex-end; gap: 12px; height: 30px; padding: 4px 4px 0 0; }
.sep.near { margin-left: 6px; }
.fill { flex: 1; }
.sep.bolt { margin-left: 11px; }
.bridge { margin-left: 10px; gap: 6px; }
.br { font: 700 12px "Open Sans", sans-serif; fill: #fff; }
.flyout { margin: 0 5px 0 6px; }

/* work area */
.work { flex: 1; display: flex; background: #69696b; }
.dockhead { height: 28px; display: flex; align-items: center; justify-content: space-between; padding: 4px 0 0 1px; background: #5c5c5e; margin: 0 0 0 1px; }
.cap { height: 15px; border-bottom: 2px solid #a8a8aa; border-radius: 3px 3px 0 0; background: linear-gradient(#e4e4e4, #c2c2c4); }
.toolcol { width: 71px; padding: 0 16px 0 6px; background: linear-gradient(90deg, #858587 3px, #69696b 3px, #69696b 60px, #444 60px, #444 63px, #dedee2 63px, #dedee2 69px, #000 69px); }
.tools { width: 49px; padding-bottom: 5px; border-radius: 3px; background: #e1e1e4; }
.tg { margin: 0 3px; padding: 2px 0; border-bottom: 2px solid #a5a5a7; display: flex; flex-direction: column; align-items: center; }
.tg:last-child { border-bottom: 0; padding: 6px 0 0; }
.sel-tools { padding: 8px 0 3px; }
.draw-tools { padding: 1px 0 4px; }
.tool { position: relative; width: 36px; height: 33px; }
.tool.active { height: 31px; border: 2px solid #b4c4d0; border-radius: 6px; background: #fff; }
.tool.more::after { content: ""; position: absolute; right: 1px; bottom: 3px; border: 3px solid; border-color: transparent #000 #000 transparent; }
.sel-tools .tool.active { margin-bottom: 3px; }
.serif { font: 700 32px/33px "Liberation Serif", serif; color: #333; }
.swatchwell { padding: 7px 0 2px; }
.minirow { flex-direction: row; justify-content: space-evenly; height: 22px; }
.mini { width: 16px; height: 15px; font: 700 13px/15px "Liberation Serif", serif; }
.mini.on { border: 1px solid #888; border-radius: 4px; }
.minirow + .tg { padding: 6px 0; }

/* document window */
.doc { flex: 1; min-width: 0; display: flex; flex-direction: column; background: #fff; border-bottom: 2px solid #000; }
.canvasrow { flex: 1; display: flex; }
.canvas { flex: 1; display: flex; justify-content: center; padding: 10px 4px 11px 0; }
.page { width: 946px; display: flex; padding: 55px 55px 54px 55px; border: 1px solid #000; box-shadow: 4px 4px 0 #000; background: #fff; }
.margins { flex: 1; border: 2px solid; border-color: #e08ce0 #b070e4; }
.vscroll { width: 21px; display: flex; flex-direction: column; background: #f3f3f6; }
.vscroll button { height: 25px; border: 1px solid #a6a6b8; border-radius: 3px; background: linear-gradient(#fff, #c9cad8); color: #333; }
.vtrack { flex: 1; padding: 87px 0; }
.vthumb { height: 100%; display: flex; align-items: center; justify-content: center; border: 1px solid #9595a8; border-right: 0; border-radius: 3px 0 0 3px; background: linear-gradient(90deg, #f8f8fc, #d0d0de); }
.vthumb i { width: 9px; height: 12px; background: repeating-linear-gradient(#889 0 1px, #eef 1px 3px); }

.status { height: 21px; display: flex; align-items: stretch; background: #dcdcdf; font-size: 14px; line-height: 18px; border-top: 1px solid #b8c0cc; }
.status button { color: #333; }
.split { width: 40px; margin-left: 2px; border: 2px solid #000 !important; border-left: 1px solid #999 !important; border-radius: 0 8px 8px 0; }
.cell { display: flex; background: #fff; border-right: 2px solid #86a4c4; }
.cell input { padding-left: 4px; outline: 0; }
.cell button, .hbtn { width: 25px; flex: none; border: 1px solid #9a9ab0; border-radius: 3px; background: linear-gradient(#fff, #c9cad8); }
.zoomcell { width: 122px; }
.pagecell { width: 152px; }
.nav { width: 22px; }
.nav + .nav { width: 24px; }
.saved { width: 274px; display: flex; align-items: center; gap: 9px; padding: 0 10px 0 3px; font-size: 15px; }
.saved span { flex: 1; }
.htrack { flex: 1; display: flex; padding: 0 146px 0 382px; background: #f4f4f7; }
.hthumb { flex: 1; display: flex; align-items: center; justify-content: center; border: 1px solid #9595a8; border-bottom: 0; background: linear-gradient(#fbfbff, #c8c8d6); }
.hthumb i { width: 12px; height: 9px; background: repeating-linear-gradient(90deg, #889 0 1px, #eef 1px 3px); }
.corner { width: 21px; background: linear-gradient(135deg, #dcdcdf 55%, transparent 55%), radial-gradient(#999 1px, #dcdcdf 2px) 0 0 / 5px 5px; }

/* panel dock */
.dock { width: 200px; padding: 0 4px 0 5px; display: flex; flex-direction: column; gap: 2px; border-left: 2px solid #48484a; border-right: 2px solid #48484a; }
.dock .dockhead { height: 26px; }
.group { display: flex; flex-direction: column; gap: 6px; padding-bottom: 6px; border-radius: 3px; background: #e2e2e4; }
.group .cap { margin-bottom: 3px; }
.group button { height: 35px; margin-left: 3px; justify-content: flex-start; gap: 7px; }
.pi { width: 35px; height: 35px; display: flex; align-items: center; justify-content: center; border: 1px solid #c0c0c4; border-radius: 4px; background: linear-gradient(#d6d6d9, #e4e4e6); }
.pi svg { width: 28px; height: 28px; }
.fxp { font: italic 700 26px/30px "Liberation Serif", serif; color: #444; }

/* annotation over the window */
.callout { position: absolute; left: 0; right: 6px; top: 55px; height: 104px; border: 6px solid #99cc00; border-left-width: 4px; }
.callout span { position: absolute; left: 197px; top: 94px; width: 404px; height: 128px; padding-top: 5px; display: flex; align-items: center; justify-content: center; background: #99cc00; font: 700 51px/60px "DejaVu Sans", Verdana, sans-serif; white-space: nowrap; }

/* windows showing behind */
.behind { width: 79px; display: flex; flex-direction: column; background: #fefefe; }
.orange { width: 4px; height: 25px; margin: 6px 0 9px 3px; background: #d96c00; }
.strip { width: 7px; height: 190px; background: #ecebee; border-bottom: 1px solid #aaa; }
.blank { flex: 1; }
.edge { width: 5px; height: 23px; margin: 0 0 28px 2px; border: 1px solid #999; border-right: 2px solid #000; }

.taskbar { height: 6px; display: flex; padding-right: 220px; }
.start { width: 145px; background: linear-gradient(#55a830, #b0f090); border-radius: 0 4px 0 0; }
.bar { flex: 1; background: linear-gradient(#c8c8e4, #eeeef8 50%, #c4c4cc); border-right: 2px solid #778; }
```
